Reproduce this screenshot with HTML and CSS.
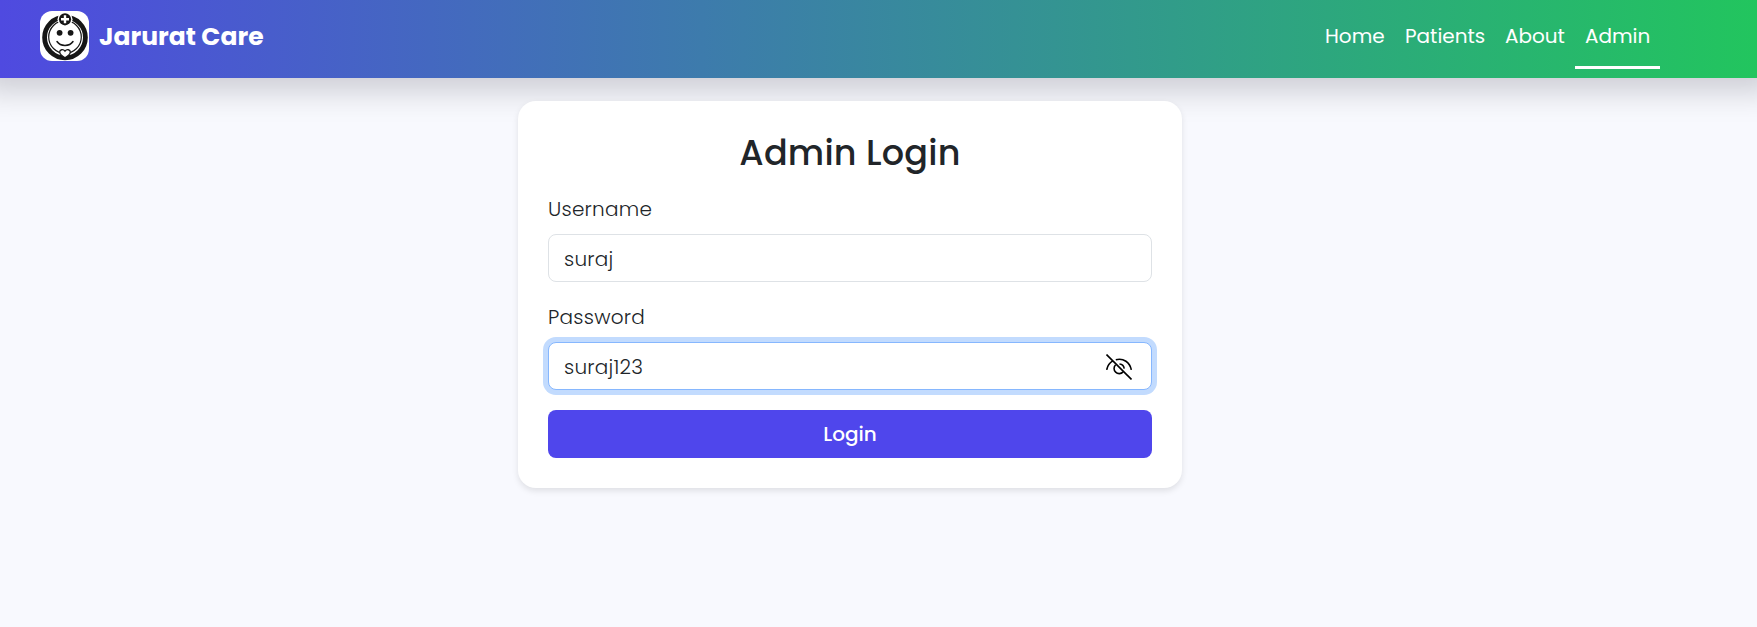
FILE: index.html
```
<!DOCTYPE html>
<html lang="en">
<head>
<meta charset="utf-8">
<title>Jarurat Care</title>
<link rel="stylesheet" href="styles.css">
</head>
<body>
<header class="navbar">
  <a class="brand">
    <svg class="logo" viewBox="0 0 49 50">
      <rect width="49" height="50" rx="12" fill="#fff"/>
      <g fill="none" stroke="#161616">
        <circle cx="25" cy="26.500" r="20.400" stroke-width="4.800"/>
        <circle cx="25" cy="26" r="16.300" stroke-width="1.200"/>
        <path d="M17 30.500c3.500 5.200 12.500 5.200 16 0" stroke-width="1.500" stroke-linecap="round"/>
      </g>
      <circle cx="25" cy="8.300" r="7.500" fill="#fff"/>
      <circle cx="25" cy="8.300" r="6.100" fill="#161616"/>
      <path d="M25 4.300v8M21 8.300h8" stroke="#fff" stroke-width="2.400"/>
      <circle cx="19.600" cy="21.800" r="2.900" fill="#161616"/>
      <circle cx="30.600" cy="21.800" r="2.900" fill="#161616"/>
      <path d="M25 46.800c-3.700-2.400-5.300-4-5.300-5.900 0-2.300 3.500-3.200 5.300-.8 1.800-2.400 5.300-1.500 5.300.8 0 1.900-1.600 3.500-5.300 5.900z" fill="#fff" stroke="#161616" stroke-width="1.300"/>
    </svg>
    <span class="brand-name">Jarurat Care</span>
  </a>
  <nav class="nav">
    <a class="nav-link home">Home</a>
    <a class="nav-link patients">Patients</a>
    <a class="nav-link about">About</a>
    <a class="nav-link active">Admin</a>
  </nav>
</header>
<main class="card">
  <h2 class="title">Admin Login</h2>
  <form class="form">
    <label class="label" for="username">Username</label>
    <input class="control" id="username" type="text" value="suraj">
    <label class="label" for="password">Password</label>
    <div class="control focused">
      <input class="password" id="password" type="text" value="suraj123">
      <svg class="eye" viewBox="0 0 26 26" fill="none" stroke="#000" stroke-width="1.600">
        <path d="M.7 15.800C1.500 11.500 3.700 8.700 6.800 6.900M9.800 5.700C17.500 3.600 24 8.500 25.300 15.800"/>
        <path d="M9.600 10.700a5.200 5.200 0 1 0 7.500 7.200M13.500 10a5.200 5.200 0 0 1 4.700 4.600"/>
        <path d="M.5.500l25 25"/>
      </svg>
    </div>
    <button class="submit" type="button">Login</button>
  </form>
</main>
</body>
</html>
```
FILE: styles.css
```
* { box-sizing: border-box; }
body {
  margin: 0;
  min-height: 100vh;
  overflow-x: hidden;
  background: #f8f9fe;
  color: #212529;
  font: 400 20px/30px Poppins, Inter, sans-serif;
}
.navbar {
  height: 78px;
  padding: 0 97px 0 40px;
  display: flex;
  justify-content: space-between;
  background: linear-gradient(90deg, #4f4ae0, #22c55e);
  box-shadow: 0 -7px 30px 20px rgba(0, 5, 15, .18);
  color: #fff;
}
.brand { display: flex; gap: 10px; padding-top: 11px; }
.logo { width: 49px; height: 50px; }
.brand-name { font-size: 25px; font-weight: 700; line-height: 52px; letter-spacing: .03px; }
.nav { display: flex; padding-top: 3px; height: 69px; }
.nav-link { padding: 18px 0 0 10px; border-bottom: 3px solid transparent; }
.home { width: 80px; }
.patients { width: 100px; }
.about { width: 80px; }
.active { width: 85px; border-color: #fff; }
.card {
  width: 664px;
  height: 387px;
  margin: 23px 0 0 518px;
  padding: 30px;
  border-radius: 18px;
  background: #fff;
  box-shadow: 0 3px 6px rgba(0, 0, 0, .1);
}
.title {
  margin: 0;
  height: 62px;
  text-align: center;
  font-size: 35px;
  font-weight: 500;
  line-height: 43px;
  letter-spacing: .2px;
}
.form { display: flex; flex-direction: column; }
.label { height: 41px; padding-top: 1px; font-weight: 300; letter-spacing: .25px; }
.control {
  height: 48px;
  border: 1px solid #dee2e6;
  border-radius: 8px;
  padding: 2px 15px 0;
  background: #fff;
  color: #212529;
  font: inherit;
  font-weight: 300;
  letter-spacing: .25px;
  outline: none;
}
#username { margin-bottom: 19px; }
.focused {
  display: flex;
  align-items: center;
  padding-right: 19px;
  border-color: #86b7fe;
  box-shadow: 0 0 0 5px #c2dbfe;
}
.password {
  flex: 1;
  padding: 0;
  border: 0;
  background: transparent;
  outline: none;
  color: inherit;
  font: inherit;
  letter-spacing: inherit;
}
.eye { width: 26px; height: 26px; }
.submit {
  height: 48px;
  margin-top: 20px;
  border: 0;
  border-radius: 8px;
  background: #4f46ec;
  color: #fff;
  font: inherit;
  font-weight: 500;
}
```
